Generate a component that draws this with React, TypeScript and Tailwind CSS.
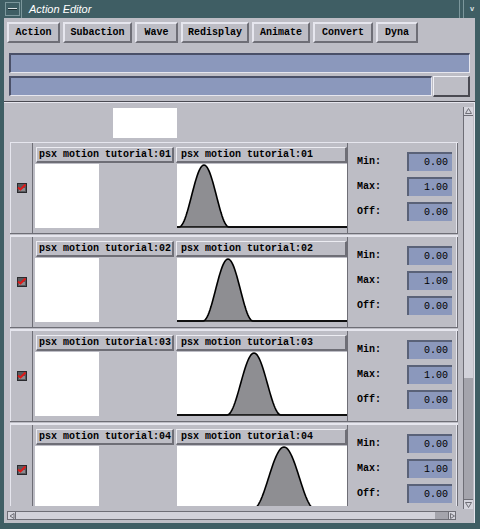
import React from "react"

const tracks = [
  { id: "01", c: 27, w: 25 },
  { id: "02", c: 51, w: 25 },
  { id: "03", c: 77, w: 27 },
  { id: "04", c: 107, w: 31 },
]

const menu = [
  { label: "Action", w: "w-[53px]" },
  { label: "Subaction", w: "w-[69px]" },
  { label: "Wave", w: "w-[43px]" },
  { label: "Redisplay", w: "w-[68px]" },
  { label: "Animate", w: "w-[58px]" },
  { label: "Convert", w: "w-[60px]" },
  { label: "Dyna", w: "w-[42px]" },
]

function curvePath(c: number, w: number) {
  const pts: string[] = []
  for (let x = 0; x <= 170; x += 1) {
    const d = Math.abs(x - c)
    const v = d < w ? (1 + Math.cos((Math.PI * d) / w)) / 2 : 0
    const y = 63 - 62 * v
    pts.push(`${x},${y.toFixed(2)}`)
  }
  return pts
}

function Curve({ c, w }: { c: number; w: number }) {
  const pts = curvePath(c, w)
  return (
    <svg width="170" height="64" viewBox="0 0 170 64" className="block">
      <polygon points={`0,63 ${pts.join(" ")} 170,63`} fill="#8e8e92" />
      <polyline points={pts.join(" ")} fill="none" stroke="#000" strokeWidth="1.6" />
      <line x1="0" y1="63" x2="170" y2="63" stroke="#000" strokeWidth="1.5" />
    </svg>
  )
}

function CheckIcon() {
  return (
    <svg width="10" height="10" viewBox="0 0 10 10" className="block">
      <rect x="0.5" y="0.5" width="9" height="9" fill="#5a5a5e" stroke="#2a2a2e" />
      <rect x="2" y="5" width="6" height="3" fill="#8a8a8e" />
      <path d="M1 4.5 L3.5 6.5 L8.5 1.5" fill="none" stroke="#e01818" strokeWidth="2" />
    </svg>
  )
}

function Field({ label, value }: { label: string; value: string }) {
  return (
    <div className="flex items-center h-[19px]">
      <span className="w-[50px] text-[10px] font-bold text-black leading-none">{label}</span>
      <div className="w-[45px] h-[19px] bg-[#8b98bc] border-t-2 border-l-2 border-[#5a6278] flex items-center justify-end pr-[4px] text-[10px] text-black leading-none">
        {value}
      </div>
    </div>
  )
}

function Row({ id, c, w }: { id: string; c: number; w: number }) {
  return (
    <div className="ml-[3px] w-[448px]">
      <div className="flex h-[91px] border-t border-l border-[#e6e6ee]">
        <div className="w-[21px] flex items-center pl-[6px]">
          <CheckIcon />
        </div>
        <div className="flex border-l border-[#6e6e76] pl-[2px] w-[315px]">
          <div className="w-[139px] flex flex-col">
            <div className="ml-[1px] mt-[4px] h-[16px] w-[138px] border-t border-l border-[#ececf2] border-b-2 border-r-2 border-b-[#6e6e76] border-r-[#6e6e76] flex items-center pl-[2px] text-[10px] font-bold text-black leading-none whitespace-nowrap">
              psx motion tutorial:{id}
            </div>
            <div className="mt-[1px] w-[64px] h-[64px] bg-white" />
          </div>
          <div className="ml-[2px] w-[171px] flex flex-col">
            <div className="mt-[4px] h-[16px] w-[171px] border-t border-l border-[#ececf2] border-b-2 border-r-2 border-b-[#6e6e76] border-r-[#6e6e76] flex items-center pl-[4px] text-[10px] font-bold text-black leading-none whitespace-nowrap">
              psx motion tutorial:{id}
            </div>
            <div className="mt-[1px] ml-[1px] w-[170px] h-[64px] bg-white">
              <Curve c={c} w={w} />
            </div>
          </div>
        </div>
        <div className="w-[109px] border-l border-[#6e6e76] pl-[9px] pt-[9px] flex flex-col gap-[6px]">
          <Field label="Min:" value="0.00" />
          <Field label="Max:" value="1.00" />
          <Field label="Off:" value="0.00" />
        </div>
        <div className="w-[2px] border-l border-[#e6e6ee] border-r border-r-[#6e6e76]" />
      </div>
      <div className="h-[3px] border-t border-[#6e6e76] border-b border-b-[#e6e6ee]" />
    </div>
  )
}

export default function App() {
  return (
    <div className="w-[480px] h-[529px] bg-[#3f5e64] flex flex-col overflow-hidden font-['Liberation_Mono',monospace]">
      {/* title bar */}
      <div className="h-[18px] flex items-center">
        <div className="ml-[5px] w-[15px] h-[14px] border border-[#7c979c] flex items-center justify-center">
          <div className="w-[9px] h-[2px] bg-[#d8e0e2] border-b border-[#1e2e32]" />
        </div>
        <div className="w-[1px] h-[18px] bg-[#7c979c] ml-[1px]" />
        <span className="ml-[7px] text-[11px] italic text-white font-['Liberation_Sans',sans-serif] leading-none">
          Action Editor
        </span>
        <div className="ml-auto w-[1px] h-[18px] bg-[#7c979c]" />
        <div className="ml-[3px] w-[1px] h-[18px] bg-[#7c979c]" />
        <div className="w-[16px] h-[18px] flex items-center justify-center text-[7px] text-[#e0e8ea] font-bold leading-none">
          v
        </div>
      </div>

      {/* body */}
      <div className="flex-1 ml-[4px] mr-[5px] mb-[6px] bg-[#bdbdc5] flex flex-col">
        {/* menu */}
        <div className="h-[30px] pt-[4px] pl-[3px] flex gap-[3px]">
          {menu.map((m) => (
            <div
              key={m.label}
              className={`${m.w} h-[21px] border-t-2 border-l-2 border-[#e6e6ee] border-b-2 border-r-2 border-b-[#6e6e76] border-r-[#6e6e76] flex items-center justify-center text-[10px] font-bold text-black leading-none`}
            >
              {m.label}
            </div>
          ))}
        </div>

        {/* fields */}
        <div className="h-[53px] pt-[5px] px-[5px] flex flex-col gap-[3px]">
          <div className="h-[20px] bg-[#8b98bc] border-t-2 border-l-2 border-[#4a5068] border-b border-r border-b-[#e6e6ee] border-r-[#e6e6ee]" />
          <div className="flex h-[21px]">
            <div className="flex-1 h-[20px] bg-[#8b98bc] border-t-2 border-l-2 border-[#4a5068] border-b border-r border-b-[#e6e6ee] border-r-[#e6e6ee]" />
            <div className="ml-[1px] w-[37px] h-[21px] border-t border-l border-[#f0f0f6] border-b-2 border-r-2 border-b-[#4a4a52] border-r-[#4a4a52]" />
          </div>
        </div>
        <div className="h-[2px] border-t border-[#4a4a52] border-b border-b-[#e6e6ee]" />

        {/* content */}
        <div className="flex-1 flex">
          <div className="pl-[3px] w-[454px] flex flex-col">
            <div className="h-[39px] pt-[5px] pl-[106px]">
              <div className="w-[64px] h-[30px] bg-white" />
            </div>
            <div className="h-[364px] overflow-hidden">
              {tracks.map((t) => (
                <Row key={t.id} id={t.id} c={t.c} w={t.w} />
              ))}
            </div>
            {/* horizontal scrollbar */}
            <div className="mt-[5px] h-[9px] w-[449px] flex border border-[#6e6e76]">
              <div className="w-[8px] bg-[#d6d6de] border-r border-[#6e6e76] flex items-center justify-center">
                <svg width="6" height="6" viewBox="0 0 6 6"><path d="M5 0.5 L1 3 L5 5.5 Z" fill="none" stroke="#6e6e76" /></svg>
              </div>
              <div className="flex-1 bg-[#d2d2da]" />
              <div className="w-[13px] bg-[#a4a4ac]" />
              <div className="w-[7px] bg-[#d6d6de] border-l border-[#6e6e76] flex items-center justify-center">
                <svg width="5" height="6" viewBox="0 0 5 6"><path d="M0.5 0.5 L4.5 3 L0.5 5.5 Z" fill="none" stroke="#6e6e76" /></svg>
              </div>
            </div>
          </div>

          {/* vertical scrollbar */}
          <div className="ml-[5px] mt-[4px] w-[10px] h-[402px] flex flex-col border-l border-[#6e6e76]">
            <div className="h-[9px] bg-[#d6d6de] border-b border-[#6e6e76] flex items-center justify-center">
              <svg width="7" height="6" viewBox="0 0 7 6"><path d="M3.5 0.5 L6.5 5.5 L0.5 5.5 Z" fill="none" stroke="#6e6e76" /></svg>
            </div>
            <div className="h-[262px] bg-[#d2d2da]" />
            <div className="flex-1 bg-[#a4a4ac]" />
            <div className="h-[10px] bg-[#d6d6de] border-t border-[#6e6e76] flex items-center justify-center">
              <svg width="7" height="6" viewBox="0 0 7 6"><path d="M0.5 0.5 L6.5 0.5 L3.5 5.5 Z" fill="none" stroke="#6e6e76" /></svg>
            </div>
          </div>
          <div className="ml-[1px] w-[1px] bg-[#e6e6ee]" />
        </div>
      </div>
    </div>
  )
}
